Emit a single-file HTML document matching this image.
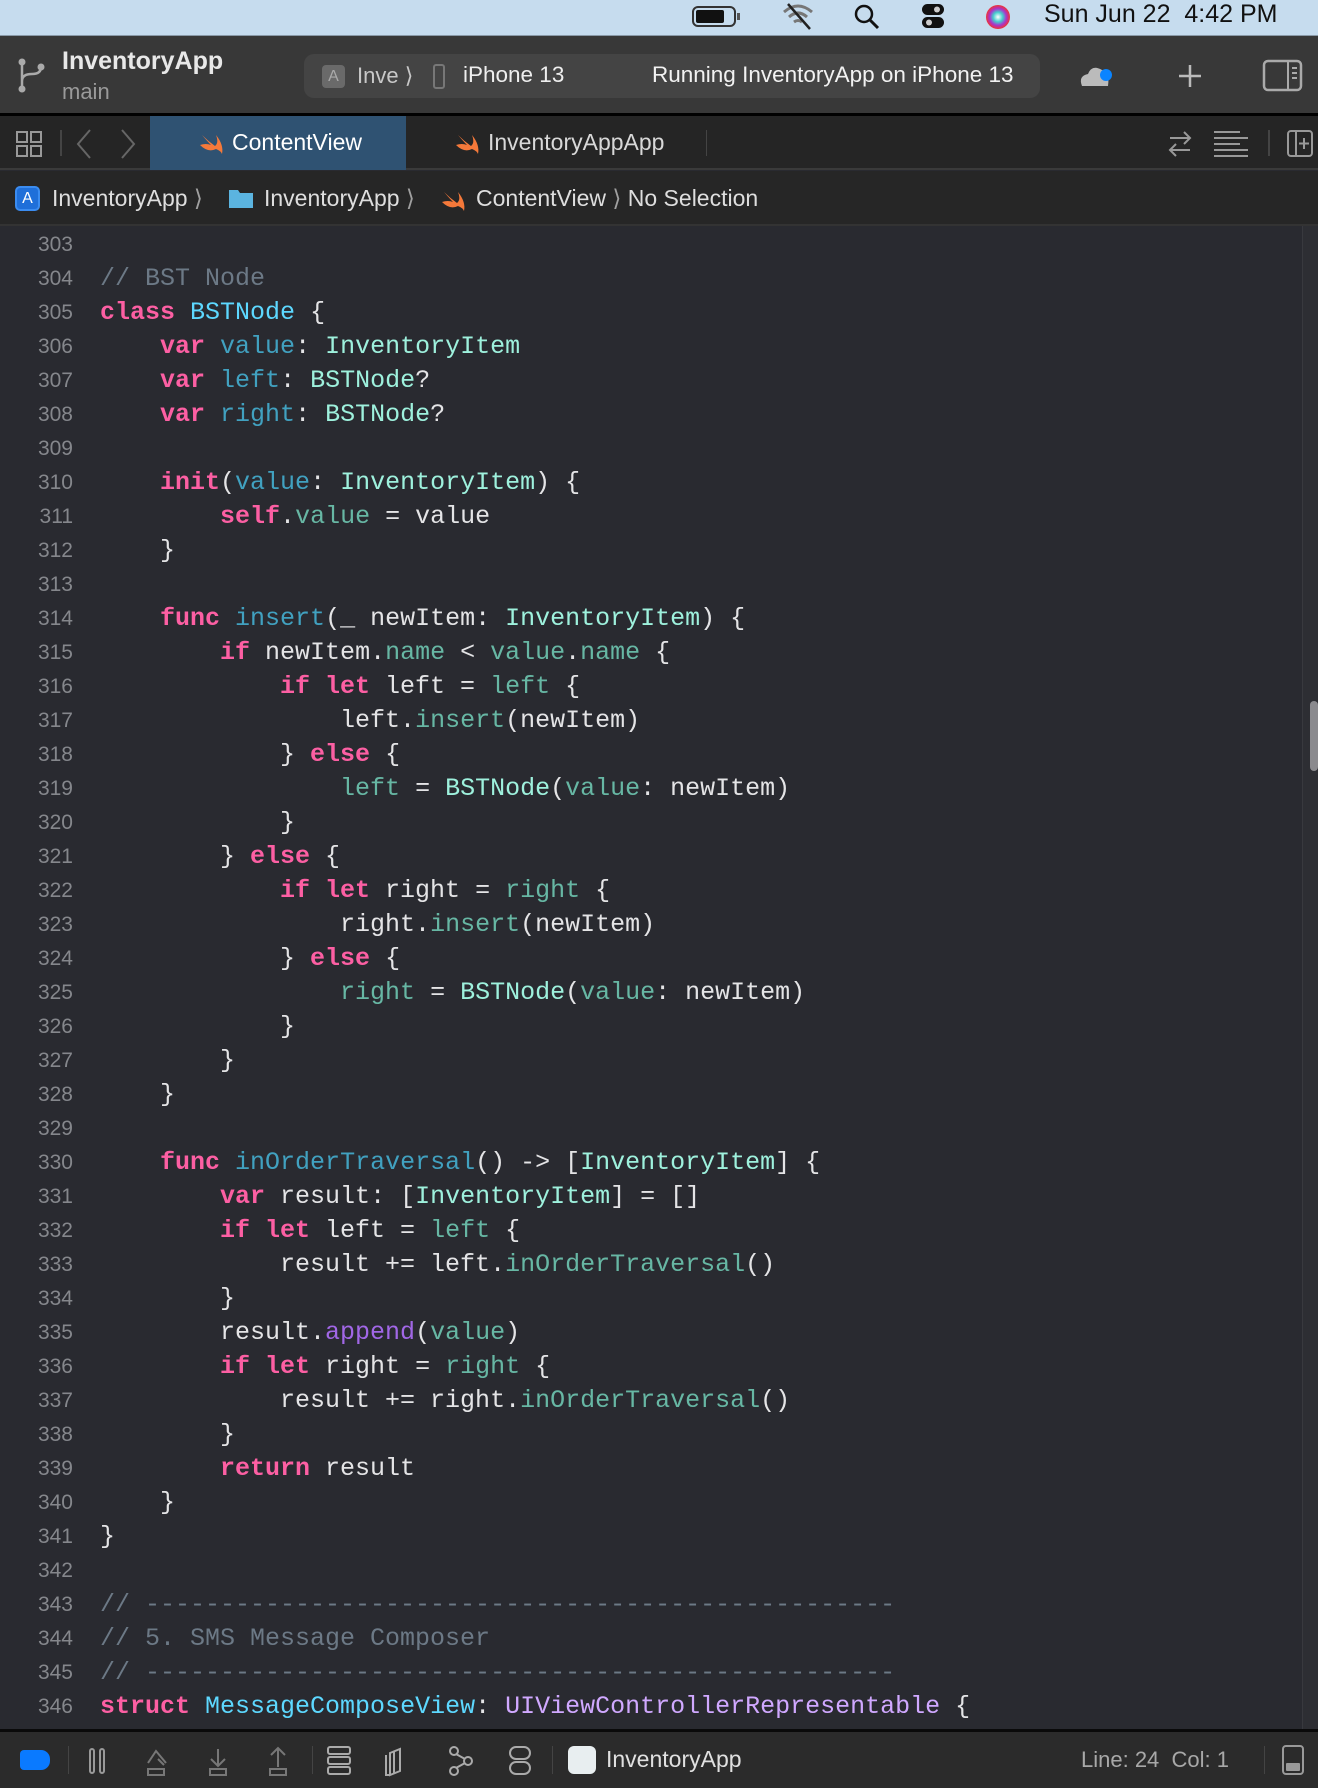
<!DOCTYPE html>
<html><head><meta charset="utf-8"><style>
*{margin:0;padding:0;box-sizing:border-box}
body{width:1318px;height:1788px;overflow:hidden;background:#292a30;font-family:"Liberation Sans",sans-serif;position:relative}
.abs{position:absolute}
#menu{left:0;top:0;width:1318px;height:36px;background:#c6dcee;border-bottom:1px solid #8a9aa8}
#tool{left:0;top:36px;width:1318px;height:77px;background:#383838}
#blk{left:0;top:113px;width:1318px;height:3px;background:#000}
#tabs{left:0;top:116px;width:1318px;height:54px;background:#252525;border-bottom:2px solid #3a3a3a}
#jump{left:0;top:171px;width:1318px;height:55px;background:#262626;border-bottom:2px solid #333}
#code{left:0;top:226px;width:1302px;height:1503px;background:#292a30}
#sb{left:1302px;top:226px;width:16px;height:1503px;background:#2d2e33;border-left:1px solid #38393e}
#bot{left:0;top:1729px;width:1318px;height:59px;background:#2b2b2b;border-top:3px solid #0a0a0a}
.ln{position:absolute;left:0;width:73px;text-align:right;color:#85878c;font-size:21px;line-height:34px}
pre{position:absolute;left:100px;top:228px;font-family:"Liberation Mono",monospace;font-size:25px;line-height:34px;color:#e4e4e6}
.k{color:#fc5fa3;font-weight:bold}.t{color:#9ef1dd}.td{color:#5dd8ff}.d{color:#41a1c0}.p{color:#67b7a4}.m{color:#a167e6}.c{color:#6c7986}.o{color:#d0a8ff}
.w{color:#f0f0f0}.g{color:#a0a0a0}
</style></head><body>
<div id="menu" class="abs"></div>
<svg class="abs" style="left:692px;top:4px" width="52" height="26"><rect x="1" y="3" width="42" height="19" rx="5" fill="none" stroke="#333" stroke-width="2"/><rect x="4" y="6" width="28" height="13" rx="2" fill="#111"/><rect x="45" y="9" width="3" height="7" fill="#555"/></svg>
<svg class="abs" style="left:780px;top:2px" width="36" height="28"><path d="M4 10 Q18 -2 32 10 M9 15 Q18 7 27 15 M14 20 Q18 17 22 20" stroke="#777" stroke-width="3" fill="none"/><path d="M8 2 L30 27" stroke="#222" stroke-width="2.5"/></svg>
<svg class="abs" style="left:853px;top:3px" width="28" height="28"><circle cx="11" cy="11" r="8" fill="none" stroke="#111" stroke-width="2.5"/><path d="M17 17 L25 25" stroke="#111" stroke-width="3"/></svg>
<svg class="abs" style="left:920px;top:2px" width="26" height="28"><rect x="2" y="2" width="22" height="11" rx="5.5" fill="#111"/><rect x="2" y="15" width="22" height="11" rx="5.5" fill="#111"/><circle cx="17" cy="7.5" r="3" fill="#ccc"/><circle cx="9" cy="20.5" r="3" fill="#ccc"/></svg>
<svg class="abs" style="left:984px;top:3px" width="28" height="28"><defs><radialGradient id="sg"><stop offset="0" stop-color="#fff"/><stop offset=".4" stop-color="#4cc"/><stop offset=".7" stop-color="#a3c"/><stop offset="1" stop-color="#e33"/></radialGradient></defs><circle cx="14" cy="14" r="12" fill="url(#sg)"/></svg>
<div class="abs" style="left:1044px;top:0px;font-size:25px;color:#111">Sun Jun 22&nbsp; 4:42 PM</div>

<div id="tool" class="abs"></div>
<svg class="abs" style="left:16px;top:56px" width="30" height="40"><circle cx="6" cy="6" r="3.5" fill="#aaa"/><circle cx="6" cy="33" r="3.5" fill="#aaa"/><circle cx="25" cy="11" r="3.5" fill="#aaa"/><path d="M6 6 V33 M6 25 Q6 18 16 18 Q25 18 25 11" stroke="#aaa" stroke-width="2.5" fill="none"/></svg>
<div class="abs" style="left:62px;top:47px;font-size:25px;font-weight:bold;color:#e8e8e8">InventoryApp</div>
<div class="abs" style="left:62px;top:79px;font-size:22px;color:#9a9a9a">main</div>
<div class="abs" style="left:304px;top:54px;width:736px;height:44px;border-radius:10px;background:#444"></div>
<div class="abs" style="left:322px;top:65px;width:23px;height:23px;border-radius:4px;background:#6a6a6a;color:#aaa;font-size:16px;text-align:center;line-height:23px">A</div>
<div class="abs" style="left:357px;top:63px;font-size:22px;color:#c8c8c8">Inve ⟩</div>
<div class="abs" style="left:433px;top:64px;width:12px;height:25px;border:2px solid #777;border-radius:3px"></div>
<div class="abs" style="left:463px;top:62px;font-size:22.5px;color:#eee">iPhone 13</div>
<div class="abs" style="left:652px;top:62px;font-size:22.5px;color:#f2f2f2">Running InventoryApp on iPhone 13</div>
<svg class="abs" style="left:1078px;top:64px" width="36" height="26"><path d="M4 22 Q0 12 10 10 Q14 0 24 6 Q32 8 30 22 Z" fill="#bbb"/><circle cx="28" cy="11" r="6" fill="#0a84ff"/></svg>
<svg class="abs" style="left:1176px;top:62px" width="28" height="28"><path d="M14 3 V25 M3 14 H25" stroke="#bbb" stroke-width="2.5"/></svg>
<svg class="abs" style="left:1262px;top:59px" width="42" height="34"><rect x="2" y="2" width="37" height="29" rx="4" fill="none" stroke="#aaa" stroke-width="2.5"/><path d="M26 2 V31 M30 9 H35 M30 14 H35 M30 19 H35" stroke="#aaa" stroke-width="2"/></svg>
<div id="blk" class="abs"></div>

<div id="tabs" class="abs"></div>
<svg class="abs" style="left:16px;top:131px" width="28" height="28"><rect x="1" y="1" width="10" height="10" fill="none" stroke="#999" stroke-width="2"/><rect x="15" y="1" width="10" height="10" fill="none" stroke="#999" stroke-width="2"/><rect x="1" y="15" width="10" height="10" fill="none" stroke="#999" stroke-width="2"/><rect x="15" y="15" width="10" height="10" fill="none" stroke="#999" stroke-width="2"/></svg>
<div class="abs" style="left:60px;top:130px;width:2px;height:26px;background:#444"></div>
<svg class="abs" style="left:74px;top:128px" width="64" height="32"><path d="M16 2 L4 16 L16 30 M48 2 L60 16 L48 30" stroke="#666" stroke-width="2" fill="none"/></svg>
<div class="abs" style="left:150px;top:116px;width:256px;height:54px;background:#2f5272"></div>
<svg class="abs" style="left:198px;top:131px" width="26" height="24"><path d="M2 14 Q10 22 18 18 Q23 20 24 23 Q26 14 18 4 Q21 12 17 15 Q10 10 4 4 Q10 11 13 14 Q8 12 2 14Z" fill="#f5793a"/></svg>
<div class="abs" style="left:232px;top:129px;font-size:23px;color:#fff">ContentView</div>
<svg class="abs" style="left:454px;top:131px" width="26" height="24"><path d="M2 14 Q10 22 18 18 Q23 20 24 23 Q26 14 18 4 Q21 12 17 15 Q10 10 4 4 Q10 11 13 14 Q8 12 2 14Z" fill="#f5793a"/></svg>
<div class="abs" style="left:488px;top:129px;font-size:23px;color:#d8d8d8">InventoryAppApp</div>
<div class="abs" style="left:706px;top:130px;width:1px;height:26px;background:#444"></div>
<svg class="abs" style="left:1166px;top:129px" width="28" height="30"><path d="M4 9 H24 M18 3 L24 9 L18 15 M24 21 H4 M10 15 L4 21 L10 27" stroke="#999" stroke-width="2" fill="none"/></svg>
<svg class="abs" style="left:1212px;top:130px" width="38" height="28"><path d="M2 2 H28 M2 8 H36 M2 14 H28 M2 20 H36 M2 26 H36" stroke="#999" stroke-width="2"/></svg>
<div class="abs" style="left:1268px;top:130px;width:2px;height:26px;background:#444"></div>
<svg class="abs" style="left:1286px;top:129px" width="28" height="30"><rect x="2" y="2" width="24" height="25" rx="3" fill="none" stroke="#999" stroke-width="2"/><path d="M10 2 V27 M18 9 V20 M13 14.5 H23" stroke="#999" stroke-width="2"/></svg>

<div id="jump" class="abs"></div>
<div class="abs" style="left:15px;top:186px;width:25px;height:25px;border-radius:5px;background:#1f6fd9;border:2px solid #3b8cf0;color:#fff;font-size:16px;text-align:center;line-height:21px">A</div>
<div class="abs" style="left:52px;top:185px;font-size:23px;color:#dedede">InventoryApp <span class="g">⟩</span></div>
<svg class="abs" style="left:228px;top:187px" width="26" height="22"><path d="M1 3 H10 L12 6 H25 V21 H1Z" fill="#5bb4e0"/></svg>
<div class="abs" style="left:264px;top:185px;font-size:23px;color:#dedede">InventoryApp <span class="g">⟩</span></div>
<svg class="abs" style="left:440px;top:188px" width="26" height="24"><path d="M2 14 Q10 22 18 18 Q23 20 24 23 Q26 14 18 4 Q21 12 17 15 Q10 10 4 4 Q10 11 13 14 Q8 12 2 14Z" fill="#f5793a"/></svg>
<div class="abs" style="left:476px;top:185px;font-size:23px;color:#dedede">ContentView <span class="g">⟩</span> No Selection</div>

<div id="code" class="abs"></div>
<div id="sb" class="abs"></div>
<div class="abs" style="left:1310px;top:701px;width:8px;height:70px;border-radius:4px;background:#8a8a8e"></div>

<div class="abs" style="left:0;top:228px">
<div class="ln" style="top:0">303</div><div class="ln" style="top:34px">304</div><div class="ln" style="top:68px">305</div><div class="ln" style="top:102px">306</div><div class="ln" style="top:136px">307</div><div class="ln" style="top:170px">308</div><div class="ln" style="top:204px">309</div><div class="ln" style="top:238px">310</div><div class="ln" style="top:272px">311</div><div class="ln" style="top:306px">312</div><div class="ln" style="top:340px">313</div><div class="ln" style="top:374px">314</div><div class="ln" style="top:408px">315</div><div class="ln" style="top:442px">316</div><div class="ln" style="top:476px">317</div><div class="ln" style="top:510px">318</div><div class="ln" style="top:544px">319</div><div class="ln" style="top:578px">320</div><div class="ln" style="top:612px">321</div><div class="ln" style="top:646px">322</div><div class="ln" style="top:680px">323</div><div class="ln" style="top:714px">324</div><div class="ln" style="top:748px">325</div><div class="ln" style="top:782px">326</div><div class="ln" style="top:816px">327</div><div class="ln" style="top:850px">328</div><div class="ln" style="top:884px">329</div><div class="ln" style="top:918px">330</div><div class="ln" style="top:952px">331</div><div class="ln" style="top:986px">332</div><div class="ln" style="top:1020px">333</div><div class="ln" style="top:1054px">334</div><div class="ln" style="top:1088px">335</div><div class="ln" style="top:1122px">336</div><div class="ln" style="top:1156px">337</div><div class="ln" style="top:1190px">338</div><div class="ln" style="top:1224px">339</div><div class="ln" style="top:1258px">340</div><div class="ln" style="top:1292px">341</div><div class="ln" style="top:1326px">342</div><div class="ln" style="top:1360px">343</div><div class="ln" style="top:1394px">344</div><div class="ln" style="top:1428px">345</div><div class="ln" style="top:1462px">346</div>
</div>
<pre>&#8203;
<span class="c">// BST Node</span>
<span class="k">class</span> <span class="td">BSTNode</span> {
    <span class="k">var</span> <span class="d">value</span>: <span class="t">InventoryItem</span>
    <span class="k">var</span> <span class="d">left</span>: <span class="t">BSTNode</span>?
    <span class="k">var</span> <span class="d">right</span>: <span class="t">BSTNode</span>?

    <span class="k">init</span>(<span class="d">value</span>: <span class="t">InventoryItem</span>) {
        <span class="k">self</span>.<span class="p">value</span> = value
    }

    <span class="k">func</span> <span class="d">insert</span>(_ newItem: <span class="t">InventoryItem</span>) {
        <span class="k">if</span> newItem.<span class="p">name</span> &lt; <span class="p">value</span>.<span class="p">name</span> {
            <span class="k">if let</span> left = <span class="p">left</span> {
                left.<span class="p">insert</span>(newItem)
            } <span class="k">else</span> {
                <span class="p">left</span> = <span class="t">BSTNode</span>(<span class="p">value</span>: newItem)
            }
        } <span class="k">else</span> {
            <span class="k">if let</span> right = <span class="p">right</span> {
                right.<span class="p">insert</span>(newItem)
            } <span class="k">else</span> {
                <span class="p">right</span> = <span class="t">BSTNode</span>(<span class="p">value</span>: newItem)
            }
        }
    }

    <span class="k">func</span> <span class="d">inOrderTraversal</span>() -&gt; [<span class="t">InventoryItem</span>] {
        <span class="k">var</span> result: [<span class="t">InventoryItem</span>] = []
        <span class="k">if let</span> left = <span class="p">left</span> {
            result += left.<span class="p">inOrderTraversal</span>()
        }
        result.<span class="m">append</span>(<span class="p">value</span>)
        <span class="k">if let</span> right = <span class="p">right</span> {
            result += right.<span class="p">inOrderTraversal</span>()
        }
        <span class="k">return</span> result
    }
}

<span class="c">// --------------------------------------------------</span>
<span class="c">// 5. SMS Message Composer</span>
<span class="c">// --------------------------------------------------</span>
<span class="k">struct</span> <span class="td">MessageComposeView</span>: <span class="o">UIViewControllerRepresentable</span> {
</pre>

<div id="bot" class="abs"></div>
<div class="abs" style="left:20px;top:1750px;width:30px;height:20px;border-radius:4px 9px 9px 4px;background:#0a7aff"></div>
<div class="abs" style="left:68px;top:1746px;width:1px;height:28px;background:#444"></div>
<div class="abs" style="left:89px;top:1748px;width:6px;height:26px;border:2px solid #999;border-radius:3px"></div>
<div class="abs" style="left:99px;top:1748px;width:6px;height:26px;border:2px solid #999;border-radius:3px"></div>
<svg class="abs" style="left:144px;top:1745px" width="200" height="32"><g stroke="#777" stroke-width="2" fill="none"><path d="M4 18 L12 6 L22 18 M14 14 L20 20 M4 24 H20 V30 H4Z"/><path d="M74 4 V20 M67 14 L74 21 L81 14 M66 24 H82 V30 H66Z"/><path d="M134 22 V4 M127 10 L134 3 L141 10 M126 24 H142 V30 H126Z"/></g></svg>
<div class="abs" style="left:312px;top:1746px;width:1px;height:28px;background:#444"></div>
<svg class="abs" style="left:326px;top:1745px" width="220" height="32"><g stroke="#aaa" stroke-width="2" fill="none"><rect x="2" y="2" width="22" height="7" rx="2"/><rect x="2" y="12" width="22" height="7" rx="2"/><rect x="2" y="22" width="22" height="7" rx="2"/><path d="M64 8 L74 4 V26 L64 30 Z M68 6 V28 M60 10 V30 L64 30"/><circle cx="128" cy="6" r="4"/><circle cx="128" cy="26" r="4"/><circle cx="142" cy="16" r="4"/><path d="M130 9 L139 14 M130 23 L139 18"/><rect x="184" y="2" width="20" height="12" rx="6"/><rect x="184" y="17" width="20" height="12" rx="6"/></g></svg>
<div class="abs" style="left:552px;top:1746px;width:1px;height:28px;background:#444"></div>
<div class="abs" style="left:568px;top:1746px;width:28px;height:28px;border-radius:6px;background:#e8eef0"></div>
<div class="abs" style="left:606px;top:1746px;font-size:23px;color:#e0e0e0">InventoryApp</div>
<div class="abs" style="left:1081px;top:1747px;font-size:22px;color:#a8a8a8">Line: 24&nbsp; Col: 1</div>
<div class="abs" style="left:1264px;top:1746px;width:1px;height:28px;background:#444"></div>
<div class="abs" style="left:1282px;top:1745px;width:22px;height:30px;border:2px solid #999;border-radius:4px"><div style="position:absolute;left:2px;right:2px;bottom:2px;height:8px;background:#999;border-radius:1px"></div></div>
</body></html>
